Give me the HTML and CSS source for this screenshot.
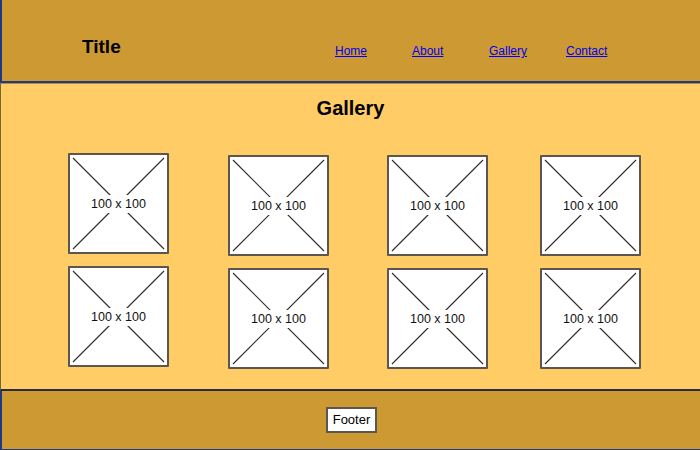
FILE: index.html
```html
<!DOCTYPE html>
<html>
<head>
<meta charset="utf-8">
<link rel="stylesheet" href="styles.css">
</head>
<body>
<header class="top">
  <h1 class="title">Title</h1>
  <nav class="nav">
    <a href="#">Home</a>
    <a href="#">About</a>
    <a href="#">Gallery</a>
    <a href="#">Contact</a>
  </nav>
</header>
<main class="main">
  <h2 class="heading">Gallery</h2>
  <div class="grid">
    <div class="thumb first"><svg viewBox="0 0 97 97"><line x1="3" y1="3" x2="94" y2="94"/><line x1="94" y1="3" x2="3" y2="94"/></svg><span class="label">100 x 100</span></div>
    <div class="thumb"><svg viewBox="0 0 97 97"><line x1="3" y1="3" x2="94" y2="94"/><line x1="94" y1="3" x2="3" y2="94"/></svg><span class="label">100 x 100</span></div>
    <div class="thumb"><svg viewBox="0 0 97 97"><line x1="3" y1="3" x2="94" y2="94"/><line x1="94" y1="3" x2="3" y2="94"/></svg><span class="label">100 x 100</span></div>
    <div class="thumb"><svg viewBox="0 0 97 97"><line x1="3" y1="3" x2="94" y2="94"/><line x1="94" y1="3" x2="3" y2="94"/></svg><span class="label">100 x 100</span></div>
    <div class="thumb first"><svg viewBox="0 0 97 97"><line x1="3" y1="3" x2="94" y2="94"/><line x1="94" y1="3" x2="3" y2="94"/></svg><span class="label">100 x 100</span></div>
    <div class="thumb"><svg viewBox="0 0 97 97"><line x1="3" y1="3" x2="94" y2="94"/><line x1="94" y1="3" x2="3" y2="94"/></svg><span class="label">100 x 100</span></div>
    <div class="thumb"><svg viewBox="0 0 97 97"><line x1="3" y1="3" x2="94" y2="94"/><line x1="94" y1="3" x2="3" y2="94"/></svg><span class="label">100 x 100</span></div>
    <div class="thumb"><svg viewBox="0 0 97 97"><line x1="3" y1="3" x2="94" y2="94"/><line x1="94" y1="3" x2="3" y2="94"/></svg><span class="label">100 x 100</span></div>
  </div>
</main>
<footer class="foot">
  <div class="footbox">Footer</div>
</footer>
</body>
</html>
```

FILE: styles.css
```css
* { box-sizing: border-box; }
html, body {
  margin: 0;
  padding: 0;
  width: 700px;
  height: 450px;
  overflow: hidden;
  font-family: "Liberation Sans", Arial, sans-serif;
}
.top {
  height: 83px;
  background: #cc9933;
  border-left: 2px solid #1f3a85;
  border-bottom: 2px solid #1f3a85;
  display: flex;
  align-items: flex-start;
  padding-left: 80px;
}
.title {
  margin: 0;
  padding-top: 36px;
  width: 253px;
  font-size: 19px;
  line-height: 22px;
  font-weight: bold;
  color: #000;
}
.nav {
  display: flex;
  padding-top: 44px;
}
.nav a {
  width: 77px;
  font-size: 12px;
  line-height: 15px;
  color: #0000ee;
  text-decoration: underline;
}
.main {
  height: 308px;
  background: #ffcc66;
  border-left: 1px solid #7d6530;
  border-top: 1px solid #b08a3a;
  border-bottom: 2px solid #2a2a40;
  padding-top: 12px;
}
.heading {
  margin: 0;
  text-align: center;
  font-size: 20px;
  line-height: 24px;
  font-weight: bold;
  color: #000;
}
.grid {
  margin-top: 33px;
  padding-left: 67px;
  display: grid;
  grid-template-columns: 160px 159px 153px 101px;
  row-gap: 10px;
}
.thumb {
  width: 101px;
  height: 101px;
  margin-top: 2px;
  background: #fff;
  border: 2px solid #5b5650;
  border-radius: 1px;
  display: grid;
  place-items: center;
}
.thumb.first { margin-top: 0; }
.thumb svg {
  grid-area: 1 / 1;
  width: 97px;
  height: 97px;
  display: block;
}
.thumb line {
  stroke: #2e2a26;
  stroke-width: 1.1;
}
.label {
  grid-area: 1 / 1;
  background: #fff;
  padding: 2px 1px;
  font-size: 12.5px;
  line-height: 14px;
  color: #111;
}
.foot {
  height: 59px;
  background: #cc9933;
  border-left: 2px solid #1f3a85;
  border-bottom: 1px solid #1f3a85;
  display: flex;
  justify-content: center;
  align-items: flex-start;
  padding-top: 16px;
}
.footbox {
  width: 51px;
  height: 26px;
  background: #fff;
  border: 2px solid #5b5650;
  font-size: 13px;
  line-height: 22px;
  text-align: center;
  color: #000;
  margin-left: 1px;
}
```
